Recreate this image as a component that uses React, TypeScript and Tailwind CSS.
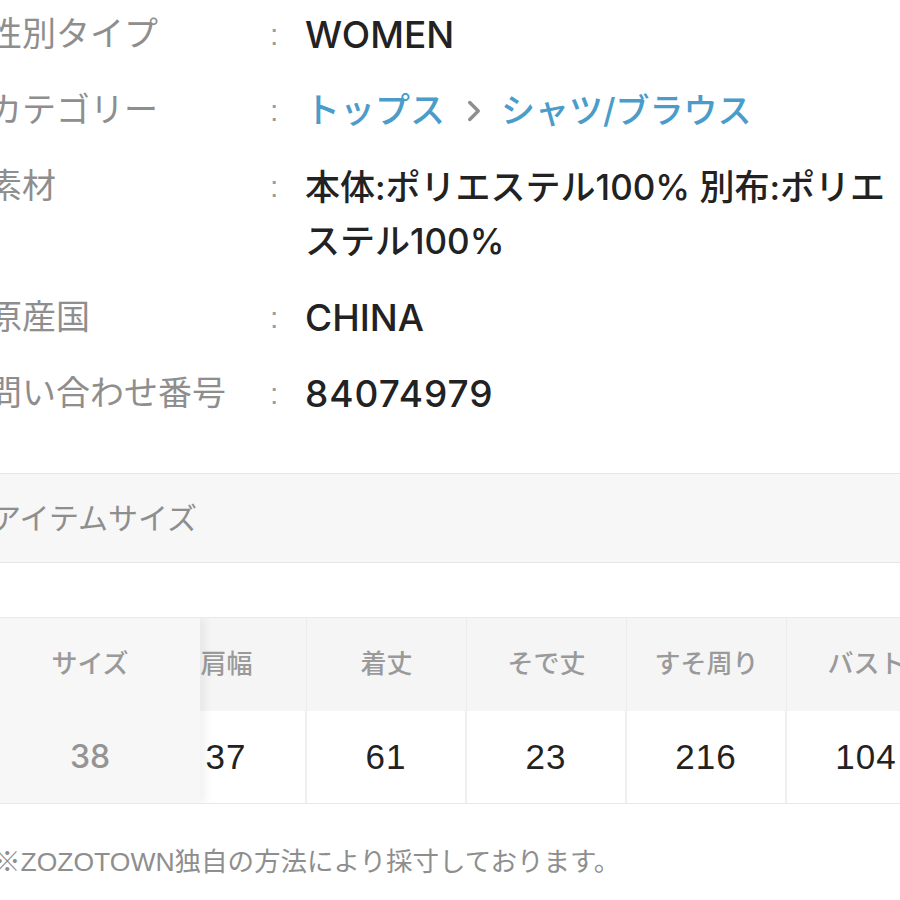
import { ChevronRight } from "lucide-react"

const font = "font-['Liberation_Sans','Noto_Sans_CJK_JP',sans-serif]"
const valueFont = "font-['Inter','Noto_Sans_CJK_JP',sans-serif]"

const columns = [
  { label: "肩幅", value: "37" },
  { label: "着丈", value: "61" },
  { label: "そで丈", value: "23" },
  { label: "すそ周り", value: "216" },
  { label: "バスト", value: "104" },
]

function InfoRow({ label, children }: { label: string; children: React.ReactNode }) {
  return (
    <div className="flex items-start leading-[53px]">
      <div className="w-[282px] shrink-0 whitespace-nowrap text-[34px] text-[#8e8e8e]">{label}</div>
      <div className="w-[35px] shrink-0 text-[30px] text-[#9a9a9a]">:</div>
      <div className={`${valueFont} flex-1 whitespace-nowrap text-[37px] font-medium text-[#222]`}>{children}</div>
    </div>
  )
}

export default function App() {
  return (
    <div className={`${font} h-[900px] w-[900px] overflow-hidden bg-white`}>
      {/* 商品情報 */}
      <div className="-ml-[12px] flex flex-col gap-[23px] pt-[8px]">
        <InfoRow label="性別タイプ">WOMEN</InfoRow>
        <InfoRow label="カテゴリー">
          <span className="flex items-center text-[#4a9ccb]">
            <span className="text-[35px]">トップス</span>
            <ChevronRight className="ml-[12px] mr-[10px] h-[34px] w-[34px] text-[#8e8e8e]" strokeWidth={2.4} />
            <span className="text-[34px]">シャツ/ブラウス</span>
          </span>
        </InfoRow>
        <InfoRow label="素材">
          <span className="text-[35px]">
            本体:ポリエステル100% 別布:ポリエ
            <br />
            ステル100%
          </span>
        </InfoRow>
        <InfoRow label="原産国">CHINA</InfoRow>
        <InfoRow label="問い合わせ番号">
          <span className="tracking-[1px]">84074979</span>
        </InfoRow>
      </div>

      {/* アイテムサイズ */}
      <div className="mt-[53px] flex h-[90px] items-center border-y border-[#e6e6e6] bg-[#f7f7f7]">
        <span className="-ml-[9px] text-[30px] text-[#8e8e8e]">アイテムサイズ</span>
      </div>

      <div className="relative mt-[54px] overflow-hidden border-y border-[#e9e9e9]">
        <div className="ml-[147px] flex w-[800px]">
          {columns.map((c) => (
            <div key={c.label} className="flex w-[160px] shrink-0 flex-col">
              <div className="flex h-[93px] items-center justify-center border-r border-[#ececec] bg-[#f5f5f5] text-[26px] font-medium text-[#9a9a9a]">
                {c.label}
              </div>
              <div className="flex h-[92px] items-center justify-center border-r-2 border-[#efefef] bg-white text-[35px] text-[#222]">
                <span className="tracking-[1px]">{c.value}</span>
              </div>
            </div>
          ))}
        </div>
        {/* 固定列 */}
        <div className="absolute left-0 top-0 flex h-full w-[200px] flex-col bg-[#f7f7f7] shadow-[6px_0_8px_rgba(0,0,0,0.05)]">
          <div className="flex h-[93px] items-center justify-center pr-[20px] text-[26px] font-medium text-[#9a9a9a]">
            サイズ
          </div>
          <div className={`${valueFont} flex h-[92px] items-center justify-center pr-[20px] text-[32px] font-medium text-[#949494]`}>
            38
          </div>
        </div>
      </div>

      <p className="-ml-[6px] mt-[38px] text-[26.5px] leading-[40px] text-[#8e8e8e]">
        ※ZOZOTOWN独自の方法により採寸しております。
      </p>
    </div>
  )
}
